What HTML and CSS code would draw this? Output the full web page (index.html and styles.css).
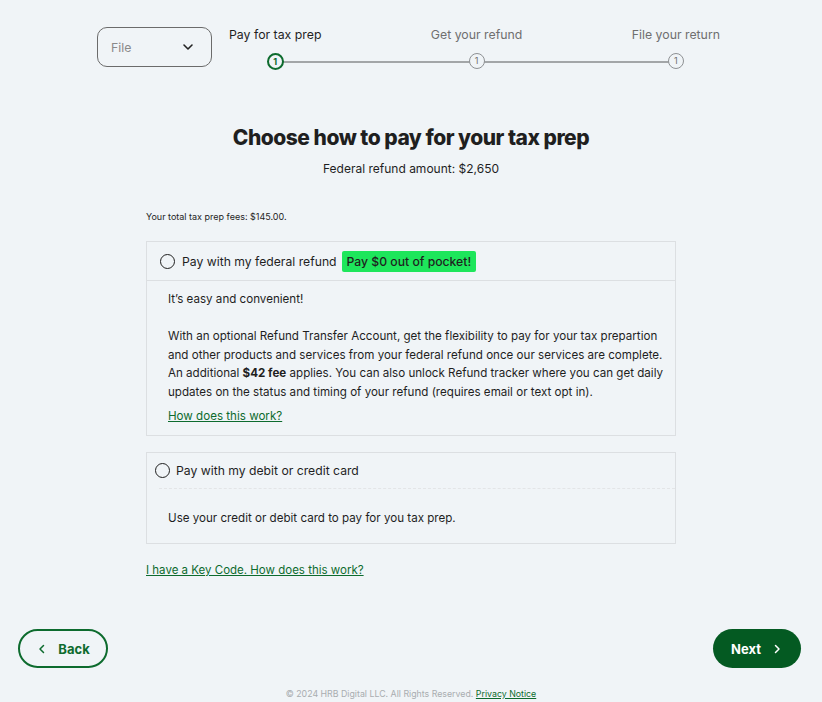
FILE: index.html
```html
<!DOCTYPE html>
<html lang="en">
<head>
<meta charset="UTF-8">
<meta name="viewport" content="width=device-width, initial-scale=1.0">
<title>Choose how to pay for your tax prep</title>
<link rel="stylesheet" href="styles.css">
</head>
<body>

<header class="top">
    <button class="select" type="button">
        <span>File</span>
        <svg width="14" height="14" viewBox="0 0 14 14"><path d="M3 5l4 4 4-4" fill="none" stroke="#222" stroke-width="1.6" stroke-linecap="round" stroke-linejoin="round"/></svg>
    </button>

    <div class="stepper">
        <div class="step active">
            <span class="step-label">Pay for tax prep</span>
            <span class="step-dot">1</span>
        </div>
        <div class="step">
            <span class="step-label">Get your refund</span>
            <span class="step-dot">1</span>
        </div>
        <div class="step">
            <span class="step-label">File your return</span>
            <span class="step-dot">1</span>
        </div>
    </div>
</header>

<main class="content">
    <h1>Choose how to pay for your tax prep</h1>
    <p class="refund">Federal refund amount: $2,650</p>

    <p class="fees">Your total tax prep fees: $145.00.</p>

    <div class="option">
        <label class="option-head">
            <span class="radio"></span>
            <span>Pay with my federal refund</span>
            <span class="badge">Pay $0 out of pocket!</span>
        </label>
        <div class="option-body">
            <p>It’s easy and convenient!</p>
            <p class="para">With an optional Refund Transfer Account, get the flexibility to pay for your tax prepartion<br>
            and other products and services from your federal refund once our services are complete.<br>
            An additional <b>$42 fee</b> applies. You can also unlock Refund tracker where you can get daily<br>
            updates on the status and timing of your refund (requires email or text opt in).</p>
            <a href="#" class="link">How does this work?</a>
        </div>
    </div>

    <div class="option card">
        <label class="option-head">
            <span class="radio"></span>
            <span>Pay with my debit or credit card</span>
        </label>
        <div class="option-body">
            <p>Use your credit or debit card to pay for you tax prep.</p>
        </div>
    </div>

    <a href="#" class="link keycode">I have a Key Code. How does this work?</a>
</main>

<nav class="actions">
    <button class="btn btn-back" type="button">
        <svg width="12" height="12" viewBox="0 0 12 12"><path d="M7.5 2.5L4 6l3.5 3.5" fill="none" stroke="currentColor" stroke-width="1.5" stroke-linecap="round" stroke-linejoin="round"/></svg>
        Back
    </button>
    <button class="btn btn-next" type="button">
        Next
        <svg width="12" height="12" viewBox="0 0 12 12"><path d="M4.5 2.5L8 6 4.5 9.5" fill="none" stroke="currentColor" stroke-width="1.5" stroke-linecap="round" stroke-linejoin="round"/></svg>
    </button>
</nav>

<footer class="footer">
    © 2024 HRB Digital LLC. All Rights Reserved. <a href="#">Privacy Notice</a>
</footer>

</body>
</html>
```

FILE: styles.css
```css
body {
    margin: 0;
    background: #f0f4f7;
    font-family: Inter, "Noto Sans", sans-serif;
    color: #1f1f1f;
}
.top {
    display: flex;
    align-items: flex-start;
    padding: 27px 0 0 97px;
}
.select {
    width: 115px;
    height: 40px;
    display: flex;
    align-items: center;
    justify-content: space-between;
    padding: 0 16px 0 13px;
    background: transparent;
    border: 1px solid #6b6b6b;
    border-radius: 10px;
    font-family: inherit;
    font-size: 12.3px;
    color: #8a8a8a;
}
.stepper {
    position: relative;
    display: flex;
    justify-content: space-between;
    width: 491px;
    margin-left: 17px;
}
.stepper::before {
    content: "";
    position: absolute;
    left: 46px;
    right: 44px;
    top: 34px;
    height: 2px;
    background: #a3a6a8;
}
.step {
    display: flex;
    flex-direction: column;
    align-items: center;
    gap: 10px;
}
.step-label {
    font-size: 12.3px;
    color: #6f6f6f;
    line-height: 16px;
}
.step-dot {
    position: relative;
    width: 14px;
    height: 14px;
    border: 1.5px solid #8e9194;
    border-radius: 50%;
    background: #f0f4f7;
    font-size: 9px;
    line-height: 14px;
    text-align: center;
    color: #6f6f6f;
}
.step.active .step-label {
    color: #1f1f1f;
}
.step.active .step-dot {
    border: 2px solid #0d6b2e;
    width: 13px;
    height: 13px;
    line-height: 13px;
    color: #0d6b2e;
    font-weight: 700;
}
.content {
    width: 530px;
    margin: 0 auto;
}
h1 {
    margin: 54px 0 0;
    text-align: center;
    font-size: 21px;
    font-weight: 800;
    letter-spacing: -0.5px;
    line-height: 28px;
}
.refund {
    margin: 9px 0 0;
    text-align: center;
    font-size: 12px;
    line-height: 16px;
}
.fees {
    margin: 34px 0 0;
    font-size: 9px;
    line-height: 12px;
}
.option {
    margin-top: 18px;
    border: 1px solid #dcdfe2;
}
.option-head {
    display: flex;
    align-items: center;
    gap: 7px;
    height: 38px;
    padding: 0 13px;
    font-size: 12.2px;
    border-bottom: 1px solid #dcdfe2;
}
.radio {
    width: 13px;
    height: 13px;
    border: 1.5px solid #1f1f1f;
    border-radius: 50%;
}
.badge {
    margin-left: -2px;
    padding: 3px 5px;
    background: #1ee65b;
    border-radius: 2px;
    font-weight: 500;
}
.option-body {
    padding: 9px 6px 9px 21px;
    font-size: 11.6px;
    line-height: 18.5px;
}
.option-body p {
    margin: 0 0 18.5px;
}
.option-body .para {
    margin-bottom: 6px;
}
.link {
    color: #0d6b2e;
    text-decoration: underline;
}
.card {
    margin-top: 16px;
}
.card .option-head {
    height: 35px;
    gap: 6px;
    margin-left: 12px;
    padding: 0;
    border-bottom: 1px dashed #e3e5e7;
}
.card .radio {
    margin-left: -4px;
}
.card .option-body {
    padding: 20px 21px 16px;
}
.card .option-body p {
    margin: 0;
}
.keycode {
    display: block;
    margin-top: 17px;
    font-size: 11.5px;
    line-height: 18px;
}
.actions {
    display: flex;
    justify-content: space-between;
    padding: 0 21px 0 18px;
    margin-top: 50px;
}
.btn {
    height: 39px;
    display: flex;
    align-items: center;
    gap: 10px;
    border-radius: 20px;
    font-family: inherit;
    font-size: 13px;
    font-weight: 700;
}
.btn-back {
    width: 90px;
    justify-content: center;
    background: transparent;
    border: 2px solid #0d6b2e;
    color: #0d6b2e;
}
.btn-next {
    width: 88px;
    justify-content: center;
    background: #045a22;
    border: none;
    color: #fff;
}
.footer {
    margin-top: 20px;
    text-align: center;
    font-size: 8.8px;
    line-height: 12px;
    color: #a9adb0;
}
.footer a {
    color: #0d6b2e;
}
```
